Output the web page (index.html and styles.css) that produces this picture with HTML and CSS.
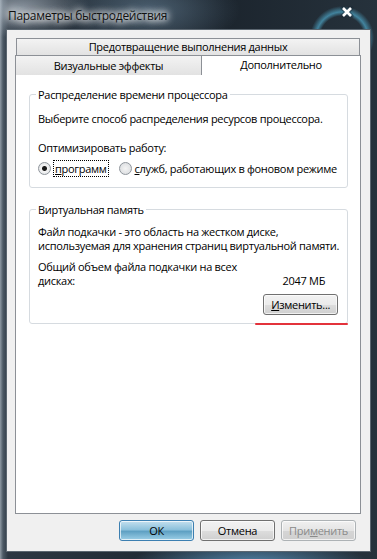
FILE: index.html
```html
<!DOCTYPE html>
<html lang="ru">
<head>
  <meta charset="UTF-8">
  <title>Параметры быстродействия</title>
  <link rel="stylesheet" href="styles.css">
</head>
<body>
<div class="window">
  <div class="titlebar">
    <span class="title">Параметры быстродействия</span>
    <svg class="close" width="14" height="12" viewBox="0 0 14 12">
      <path d="M3 2 L11 10 M11 2 L3 10" stroke="#1b2a36" stroke-width="5" stroke-linecap="round" opacity="0.5"/>
      <path d="M3 2 L11 10 M11 2 L3 10" stroke="#fff" stroke-width="2.6"/>
    </svg>
  </div>

  <div class="client">
    <div class="tabs">
      <div class="tab-row">
        <div class="tab wide">Предотвращение выполнения данных</div>
      </div>
      <div class="tab-row">
        <div class="tab left">Визуальные эффекты</div>
        <div class="tab active">Дополнительно</div>
      </div>
    </div>

    <div class="panel">
      <fieldset class="group cpu">
        <legend>Распределение времени процессора</legend>
        <p class="line">Выберите способ распределения ресурсов процессора.</p>
        <p class="line label">Оптимизировать работу:</p>
        <div class="radios">
          <label class="radio checked"><span class="dot"></span><span class="focus"><u>п</u>рограмм</span></label>
          <label class="radio"><span class="dot"></span><span><u>с</u>лужб, работающих в фоновом режиме</span></label>
        </div>
      </fieldset>

      <fieldset class="group memory">
        <legend>Виртуальная память</legend>
        <p class="line">Файл подкачки - это область на жестком диске,<br>используемая для хранения страниц виртуальной памяти.</p>
        <div class="total">
          <span>Общий объем файла подкачки на всех<br>дисках:</span>
          <span class="size">2047 МБ</span>
        </div>
        <div class="change-row">
          <button class="btn"><u>И</u>зменить...</button>
        </div>
        <div class="mark"></div>
      </fieldset>
    </div>

    <div class="buttons">
      <button class="btn default">ОК</button>
      <button class="btn">Отмена</button>
      <button class="btn disabled">При<u>м</u>енить</button>
    </div>
  </div>
</div>
</body>
</html>
```

FILE: styles.css
```css
body {
  margin: 0;
  font-family: "Open Sans", "Noto Sans", sans-serif;
  font-size: 11px;
  letter-spacing: -0.3px;
  color: #000;
  background: #1d262e;
}

.window {
  position: relative;
  width: 377px;
  height: 559px;
  box-sizing: border-box;
  padding: 29px 6px 7px 6px;
  background:
    radial-gradient(circle at 342px 38px, transparent 22px, rgba(90, 200, 240, 0.55) 26px, transparent 32px),
    radial-gradient(ellipse 120px 30px at 250px 566px, rgba(110, 180, 230, 0.7), transparent),
    radial-gradient(ellipse 90px 40px at 150px 10px, rgba(150, 190, 220, 0.35), transparent),
    radial-gradient(ellipse 70px 30px at 20px 8px, rgba(200, 210, 220, 0.6), transparent),
    linear-gradient(90deg, #8f9aa4 0px, #4c5965 3px, #2c3742 8px, #1c252e 60%, #26323c 100%);
}

.titlebar {
  position: absolute;
  top: 0;
  left: 0;
  right: 0;
  height: 29px;
}

.title {
  position: absolute;
  left: 8px;
  top: 7px;
  font-size: 12px;
  color: #111;
  text-shadow: 0 0 6px #fff, 0 0 8px #fff, 0 0 10px rgba(255, 255, 255, 0.9);
}

.close {
  position: absolute;
  left: 340px;
  top: 6px;
}

.client {
  height: 100%;
  box-sizing: border-box;
  border: 1px solid #5b6670;
  background: #f0f0f0;
  padding: 8px 9px 0 8px;
}

.tab-row {
  display: flex;
}

.tab {
  box-sizing: border-box;
  border: 1px solid #8c9096;
  border-bottom: none;
  background: linear-gradient(#f3f3f3, #e2e2e2);
  text-align: center;
}

.tab.wide {
  flex: 1;
  height: 17px;
  line-height: 16px;
  margin: 0 1px 0 1px;
}

.tab.left {
  width: 187px;
  height: 20px;
  line-height: 20px;
}

.tab.active {
  flex: 1;
  height: 20px;
  line-height: 18px;
  background: #fff;
  border-left: none;
}

.panel {
  position: relative;
  height: 439px;
  box-sizing: border-box;
  border: 1px solid #8c9096;
  border-top: none;
  background: #fff;
  padding: 12px 12px 0 13px;
}

.group {
  position: relative;
  margin: 0 0 12px 0;
  padding: 8px 8px 8px 8px;
  border: 1px solid #d6dbe0;
  border-radius: 3px;
}

.group.cpu {
  padding-top: 10px;
  padding-bottom: 11px;
  margin-bottom: 14px;
}

.group legend {
  padding: 0 2px;
  margin-left: -2px;
}

.line {
  margin: 0 0 7px 0;
  line-height: 14px;
  white-space: nowrap;
}

.cpu .line {
  margin-bottom: 15px;
}

.cpu .line.label {
  margin-bottom: 6px;
}

.radios {
  display: flex;
  gap: 11px;
  line-height: 15px;
}

.radio {
  display: flex;
  align-items: center;
  gap: 3px;
}

.dot {
  width: 11px;
  height: 11px;
  border-radius: 50%;
  border: 1px solid #8f959c;
  background: radial-gradient(circle, #f4f4f4, #d6d9dc);
  box-sizing: content-box;
}

.radio.checked .dot {
  background: radial-gradient(circle, #1a1a1a 0, #1a1a1a 2px, #f4f4f4 3px, #dadde0 100%);
}

.focus {
  outline: 1px dotted #000;
  padding: 0 1px;
}

.total {
  display: flex;
  justify-content: space-between;
  align-items: flex-end;
  line-height: 14px;
  padding-right: 14px;
}

.change-row {
  display: flex;
  justify-content: flex-end;
  padding: 6px 1px 0 0;
}

.btn {
  font-family: inherit;
  font-size: 11px;
  letter-spacing: -0.3px;
  width: 75px;
  height: 21px;
  padding: 0;
  border: 1px solid #707070;
  border-radius: 3px;
  color: #000;
  background: linear-gradient(#f2f2f2 0%, #ebebeb 50%, #dddddd 51%, #cfcfcf 100%);
  box-shadow: inset 0 0 0 1px rgba(255, 255, 255, 0.7);
}

.mark {
  position: absolute;
  left: 225px;
  right: -1px;
  bottom: -2px;
  height: 2px;
  border-radius: 1px;
  background: #e3323b;
}

.buttons {
  display: flex;
  justify-content: flex-end;
  gap: 6px;
  padding: 6px 5px 0 0;
}

.btn.default {
  border-color: #3c7fb1;
  background: linear-gradient(#c4e0ef 0%, #8cc1dc 45%, #5fa1c3 55%, #9ccfe7 100%);
}

.btn.disabled {
  color: #8a8a8a;
  border-color: #adb2b5;
  background: linear-gradient(#f0f0f0 0%, #e4e4e4 50%, #d5d5d5 51%, #d0d0d0 100%);
}
```
